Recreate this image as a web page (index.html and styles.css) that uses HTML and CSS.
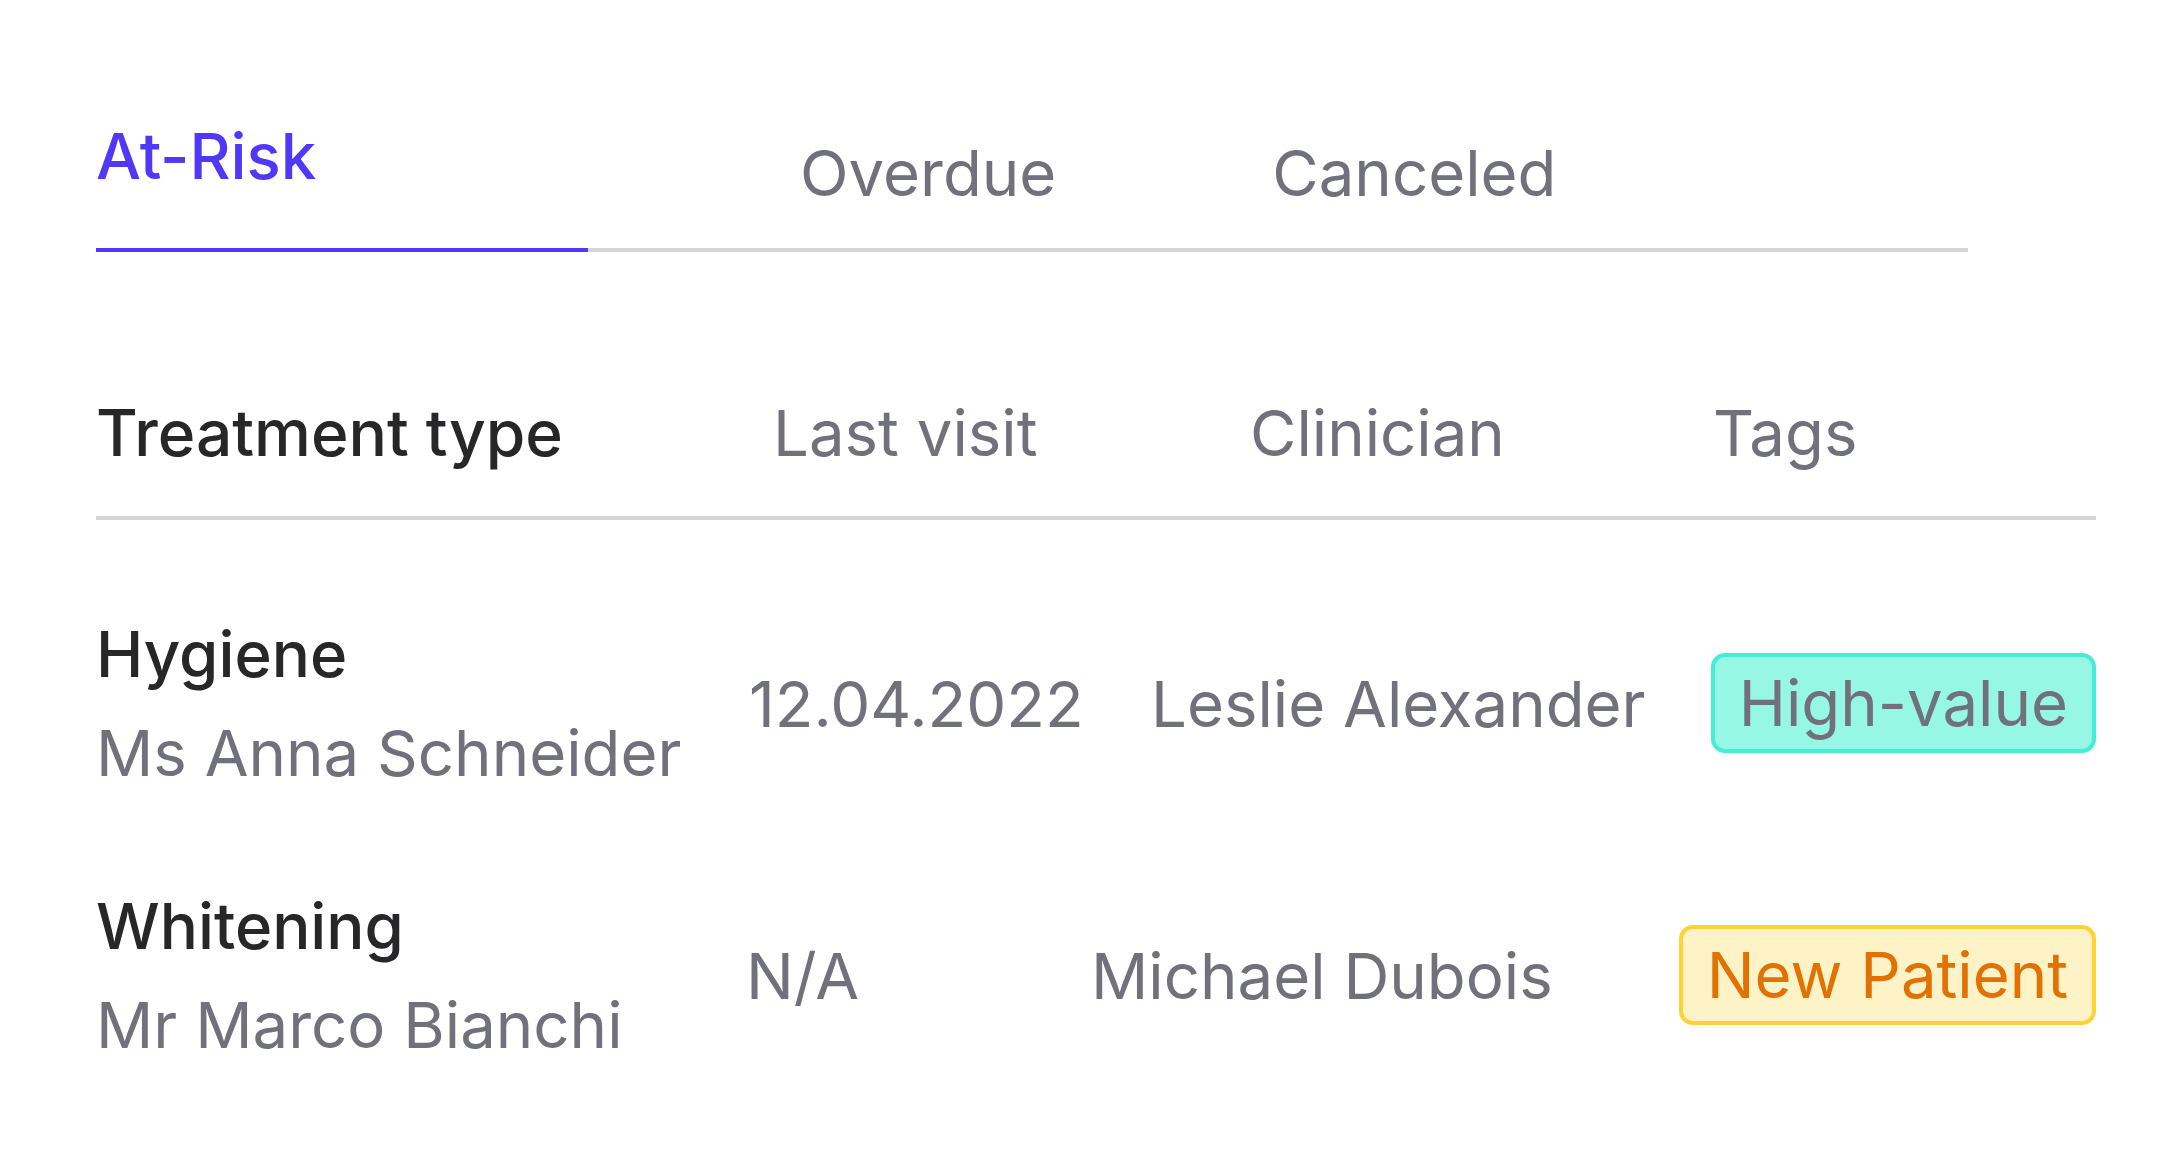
FILE: index.html
```html
<!DOCTYPE html>
<html lang="en">
<head>
<meta charset="utf-8">
<title>Recall list</title>
<link rel="stylesheet" href="styles.css">
</head>
<body>
<main class="page">
  <nav class="tabs">
    <div class="tab tab--active">At-Risk</div>
    <div class="tab">Overdue</div>
    <div class="tab tab--last">Canceled</div>
  </nav>

  <section class="table">
    <div class="thead">
      <div class="th th--main">Treatment type</div>
      <div class="th">Last visit</div>
      <div class="th">Clinician</div>
      <div class="th">Tags</div>
    </div>

    <div class="row row--a">
      <div class="cell cell--main">
        <div class="treat">Hygiene</div>
        <div class="patient">Ms Anna Schneider</div>
      </div>
      <div class="cell">12.04.2022</div>
      <div class="cell">Leslie Alexander</div>
      <div class="cell cell--tag"><span class="badge badge--teal">High-value</span></div>
    </div>

    <div class="row row--b">
      <div class="cell cell--main">
        <div class="treat">Whitening</div>
        <div class="patient">Mr Marco Bianchi</div>
      </div>
      <div class="cell">N/A</div>
      <div class="cell">Michael Dubois</div>
      <div class="cell cell--tag"><span class="badge badge--amber">New Patient</span></div>
    </div>
  </section>
</main>
</body>
</html>
```

FILE: styles.css
```css
html, body {
  margin: 0;
  padding: 0;
  background: #ffffff;
}

body {
  font-family: Inter, "Noto Sans", "Liberation Sans", sans-serif;
  font-size: 63.5px;
  line-height: 99px;
  color: #71717b;
}

.page {
  padding: 106px 0 0 96px;
}

.tabs {
  display: flex;
  align-items: flex-end;
  gap: 212px;
  width: 1872px;
  border-bottom: 4px solid #d4d4d8;
}

.tab {
  padding-bottom: 26px;
  color: #71717b;
  white-space: nowrap;
}

.tab--last {
  margin-left: 4px;
}

.tab--active {
  width: 492px;
  padding-bottom: 43px;
  margin-bottom: -4px;
  border-bottom: 4px solid #4f39f6;
  color: #4f39f6;
  font-weight: 500;
}

.table {
  width: 2000px;
  margin-top: 131px;
}

.thead {
  display: grid;
  grid-template-columns: 677px 477px 463px auto;
  padding-bottom: 34px;
  border-bottom: 4px solid #d4d4d8;
  margin-bottom: 84px;
  white-space: nowrap;
}

.th--main {
  color: #27272a;
  font-weight: 500;
  font-size: 64px;
}

.row {
  display: grid;
  align-items: center;
  white-space: nowrap;
  margin-bottom: 74px;
}

.row--a {
  grid-template-columns: 653px 402px 559px 1fr;
}

.row--b {
  grid-template-columns: 650px 345px 583px 1fr;
}

.treat {
  color: #27272a;
  font-weight: 500;
}

.cell--tag {
  display: flex;
  justify-content: flex-end;
}

.badge {
  display: inline-block;
  padding: 0 24px;
  border: 4px solid transparent;
  border-radius: 14px;
  line-height: 92px;
}

.badge--teal {
  background: #96f7e4;
  border-color: #46ecd5;
  color: #71717b;
}

.badge--amber {
  background: #fef3c6;
  border-color: #ffd236;
  color: #e17100;
}
```
